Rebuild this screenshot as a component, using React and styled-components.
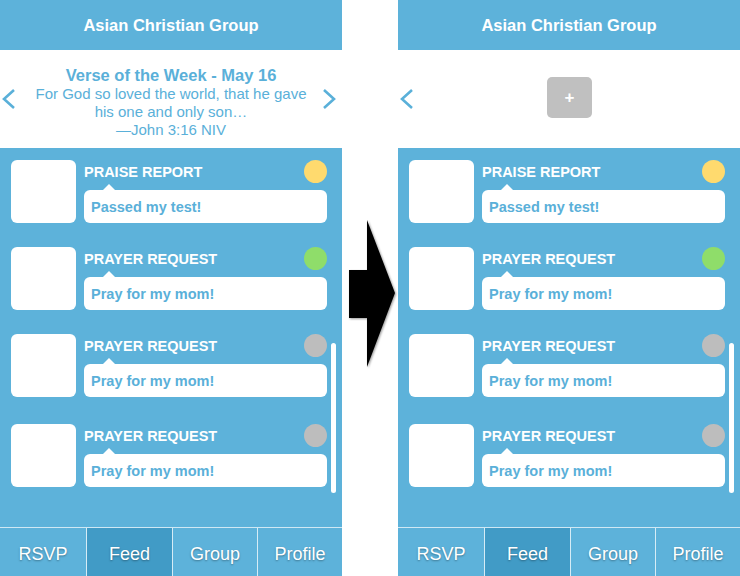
import React from "react";
import styled, { createGlobalStyle } from "styled-components";

const BLUE = "#5db2da";
const TEXT_BLUE = "#5ab0d9";

const GlobalStyle = createGlobalStyle`
  html, body {
    margin: 0;
    padding: 0;
    background: #fff;
    font-family: "Liberation Sans", Arial, Helvetica, sans-serif;
  }
`;

const Stage = styled.div`
  display: flex;
  flex-direction: row;
  width: 740px;
  height: 576px;
  overflow: hidden;
`;

const Phone = styled.div`
  display: flex;
  flex-direction: column;
  width: 342px;
  height: 576px;
  flex-shrink: 0;
  background: ${BLUE};
  overflow: hidden;
`;

const Header = styled.div`
  height: 50px;
  flex-shrink: 0;
  display: flex;
  align-items: center;
  justify-content: center;
  color: #fff;
  font-weight: bold;
  font-size: 16.5px;
`;

const Banner = styled.div`
  height: 98px;
  flex-shrink: 0;
  background: #fff;
  display: grid;
  grid-template-columns: 26px 1fr 26px;
  align-items: center;
`;

const Chevron = styled.svg`
  width: 16px;
  height: 22px;
  justify-self: ${(p) => (p.$right ? "end" : "start")};
  margin: ${(p) => (p.$right ? "0 5px 0 0" : "0 0 0 1px")};
`;

const Verse = styled.div`
  display: flex;
  flex-direction: column;
  align-items: center;
  text-align: center;
  color: ${TEXT_BLUE};
  font-size: 15px;
  line-height: 18px;
  padding-top: 6px;
  & strong {
    font-size: 16.5px;
    line-height: 20px;
  }
`;

const AddButton = styled.div`
  justify-self: center;
  width: 45px;
  height: 41px;
  border-radius: 5px;
  background: #c0c0c0;
  color: #fff;
  font-weight: bold;
  font-size: 17px;
  display: flex;
  align-items: center;
  justify-content: center;
  margin: -3px 0 0 1px;
`;

const Feed = styled.div`
  position: relative;
  flex: 1;
  display: flex;
  flex-direction: column;
  gap: 23px;
  padding: 12px 15px 0 11px;
`;

const Item = styled.div`
  display: grid;
  grid-template-columns: 65px 1fr;
  column-gap: 8px;
  height: 64px;
  margin-top: ${(p) => (p.$extra ? "3px" : "0")};
`;

const Avatar = styled.div`
  width: 65px;
  height: 63px;
  border-radius: 6px;
  background: #fff;
`;

const Body = styled.div`
  display: flex;
  flex-direction: column;
`;

const TopRow = styled.div`
  display: flex;
  align-items: center;
  justify-content: space-between;
  height: 23px;
`;

const Label = styled.span`
  color: #fff;
  font-weight: bold;
  font-size: 14.5px;
`;

const Dot = styled.span`
  width: 23px;
  height: 23px;
  border-radius: 50%;
  background: ${(p) => p.$color};
`;

const Bubble = styled.div`
  position: relative;
  margin-top: 7px;
  height: 33px;
  border-radius: 6px;
  background: #fff;
  display: flex;
  align-items: center;
  padding-left: 7px;
  color: ${TEXT_BLUE};
  font-weight: bold;
  font-size: 14.5px;
  &::before {
    content: "";
    position: absolute;
    left: 19px;
    top: -6px;
    border-left: 6px solid transparent;
    border-right: 6px solid transparent;
    border-bottom: 6px solid #fff;
  }
`;

const Scrollbar = styled.div`
  position: absolute;
  left: 331px;
  top: 195px;
  width: 5px;
  height: 150px;
  border-radius: 3px;
  background: #fff;
`;

const Nav = styled.div`
  height: 48px;
  flex-shrink: 0;
  display: grid;
  grid-template-columns: 86px 86px 85px 85px;
  border-top: 1px solid #cfe8f4;
`;

const Tab = styled.div`
  display: flex;
  align-items: center;
  justify-content: center;
  padding-top: 5px;
  color: #fff;
  font-size: 18px;
  text-shadow: 0 1px 2px rgba(0, 0, 0, 0.35);
  background: ${(p) => (p.$active ? "#419bc6" : BLUE)};
  border-left: ${(p) => (p.$first ? "none" : "1px solid #d6ecf6")};
`;

const ArrowColumn = styled.div`
  width: 56px;
  flex-shrink: 0;
  background: #fff;
`;

const items = [
  { label: "PRAISE REPORT", text: "Passed my test!", color: "#ffda6e" },
  { label: "PRAYER REQUEST", text: "Pray for my mom!", color: "#8fdd6a" },
  { label: "PRAYER REQUEST", text: "Pray for my mom!", color: "#bdbdbd" },
  { label: "PRAYER REQUEST", text: "Pray for my mom!", color: "#bdbdbd" },
];

const tabs = ["RSVP", "Feed", "Group", "Profile"];

const ChevronIcon = ({ right }) => (
  <Chevron $right={right} viewBox="0 0 16 22">
    <polyline
      points={right ? "3,2 13,11 3,20" : "13,2 3,11 13,20"}
      fill="none"
      stroke={TEXT_BLUE}
      strokeWidth="2.6"
    />
  </Chevron>
);

const FeedScreen = ({ verse }) => (
  <Phone>
    <Header>Asian Christian Group</Header>
    <Banner>
      <ChevronIcon />
      {verse ? (
        <Verse>
          <strong>Verse of the Week - May 16</strong>
          <span>For God so loved the world, that he gave</span>
          <span>his one and only son…</span>
          <span>—John 3:16 NIV</span>
        </Verse>
      ) : (
        <AddButton>+</AddButton>
      )}
      {verse ? <ChevronIcon right /> : <span />}
    </Banner>
    <Feed>
      {items.map((it, i) => (
        <Item key={i} $extra={i === items.length - 1}>
          <Avatar />
          <Body>
            <TopRow>
              <Label>{it.label}</Label>
              <Dot $color={it.color} />
            </TopRow>
            <Bubble>{it.text}</Bubble>
          </Body>
        </Item>
      ))}
      <Scrollbar />
    </Feed>
    <Nav>
      {tabs.map((t, i) => (
        <Tab key={t} $first={i === 0} $active={t === "Feed"}>
          {t}
        </Tab>
      ))}
    </Nav>
  </Phone>
);

export default function App() {
  return (
    <>
      <GlobalStyle />
      <Stage>
        <FeedScreen verse />
        <ArrowColumn>
          <svg width="56" height="576" viewBox="0 0 56 576">
            <defs>
              <filter id="shade" x="-20%" y="-20%" width="140%" height="140%">
                <feDropShadow dx="1" dy="1" stdDeviation="1.2" floodOpacity="0.4" />
              </filter>
            </defs>
            <polygon
              points="7,270 25,270 25,220 53,293 25,367 25,318 7,318"
              fill="#000"
              filter="url(#shade)"
            />
          </svg>
        </ArrowColumn>
        <FeedScreen />
      </Stage>
    </>
  );
}
